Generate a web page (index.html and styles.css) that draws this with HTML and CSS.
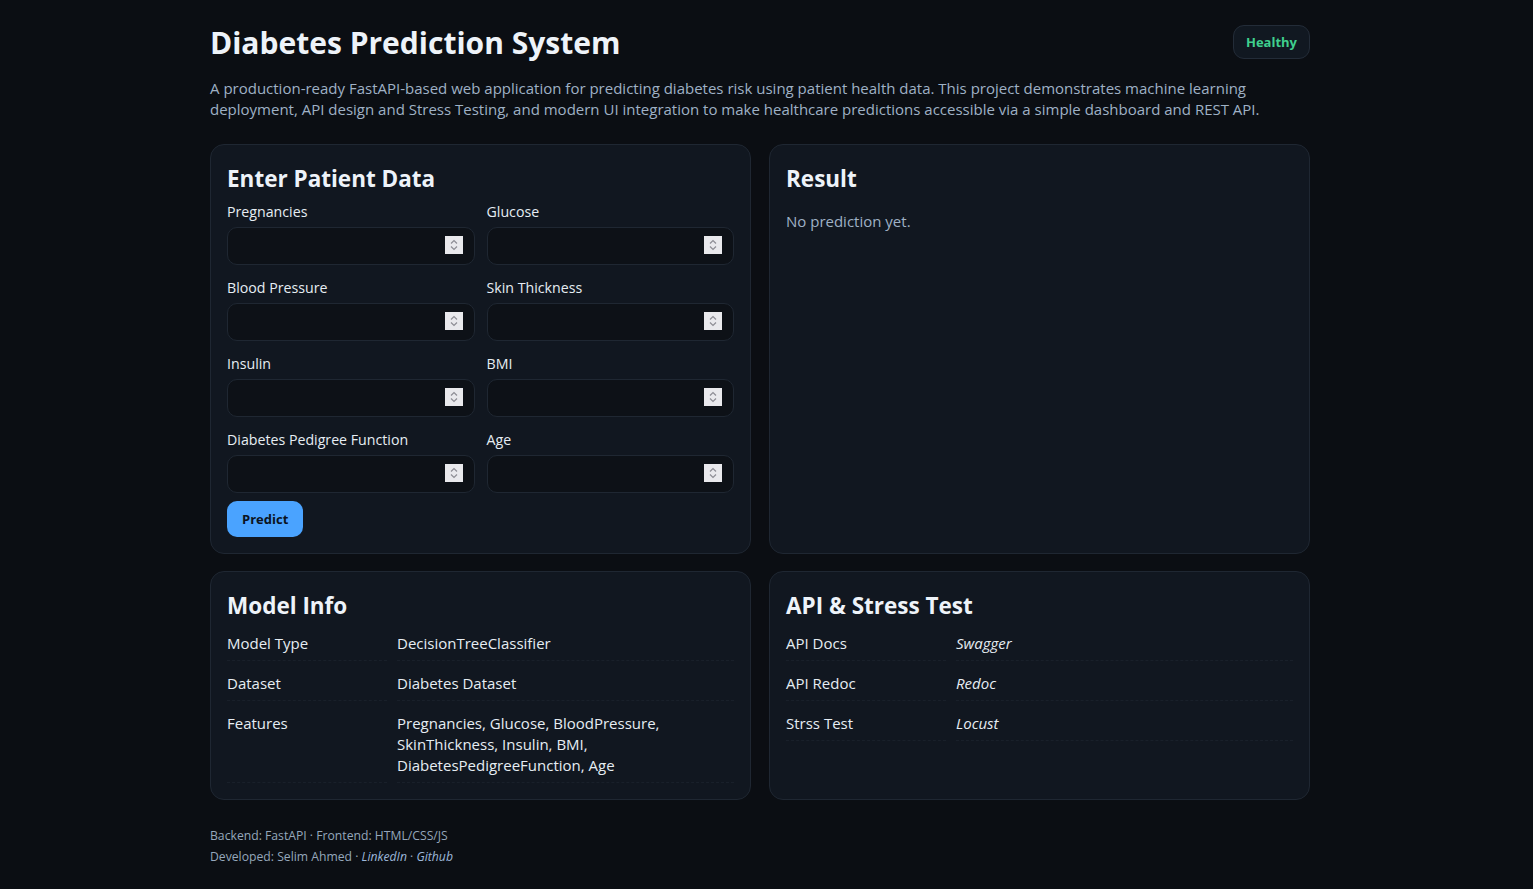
FILE: index.html
```html
<!DOCTYPE html>
<html lang="en">
<head>
<meta charset="utf-8">
<title>Diabetes Prediction System</title>
<link rel="stylesheet" href="styles.css">
</head>
<body>
<div class="wrap">
  <header class="header">
    <h1 class="title">Diabetes Prediction System</h1>
    <span class="badge">Healthy</span>
  </header>
  <p class="desc">A production-ready FastAPI-based web application for predicting diabetes risk using patient health data. This project demonstrates machine learning deployment, API design and Stress Testing, and modern UI integration to make healthcare predictions accessible via a simple dashboard and REST API.</p>

  <main class="grid">
    <section class="card">
      <h2 class="card-title">Enter Patient Data</h2>
      <form class="fields">
        <div class="field"><label class="label">Pregnancies</label><div class="input"><span class="spin"><svg width="18" height="18" viewBox="0 0 18 18"><path d="M6 7.5 9 4.5 12 7.5M6 10.5 9 13.5 12 10.5" fill="none" stroke="#8d8d95" stroke-width="1.2"/></svg></span></div></div>
        <div class="field"><label class="label">Glucose</label><div class="input"><span class="spin"><svg width="18" height="18" viewBox="0 0 18 18"><path d="M6 7.5 9 4.5 12 7.5M6 10.5 9 13.5 12 10.5" fill="none" stroke="#8d8d95" stroke-width="1.2"/></svg></span></div></div>
        <div class="field"><label class="label">Blood Pressure</label><div class="input"><span class="spin"><svg width="18" height="18" viewBox="0 0 18 18"><path d="M6 7.5 9 4.5 12 7.5M6 10.5 9 13.5 12 10.5" fill="none" stroke="#8d8d95" stroke-width="1.2"/></svg></span></div></div>
        <div class="field"><label class="label">Skin Thickness</label><div class="input"><span class="spin"><svg width="18" height="18" viewBox="0 0 18 18"><path d="M6 7.5 9 4.5 12 7.5M6 10.5 9 13.5 12 10.5" fill="none" stroke="#8d8d95" stroke-width="1.2"/></svg></span></div></div>
        <div class="field"><label class="label">Insulin</label><div class="input"><span class="spin"><svg width="18" height="18" viewBox="0 0 18 18"><path d="M6 7.5 9 4.5 12 7.5M6 10.5 9 13.5 12 10.5" fill="none" stroke="#8d8d95" stroke-width="1.2"/></svg></span></div></div>
        <div class="field"><label class="label">BMI</label><div class="input"><span class="spin"><svg width="18" height="18" viewBox="0 0 18 18"><path d="M6 7.5 9 4.5 12 7.5M6 10.5 9 13.5 12 10.5" fill="none" stroke="#8d8d95" stroke-width="1.2"/></svg></span></div></div>
        <div class="field"><label class="label">Diabetes Pedigree Function</label><div class="input"><span class="spin"><svg width="18" height="18" viewBox="0 0 18 18"><path d="M6 7.5 9 4.5 12 7.5M6 10.5 9 13.5 12 10.5" fill="none" stroke="#8d8d95" stroke-width="1.2"/></svg></span></div></div>
        <div class="field"><label class="label">Age</label><div class="input"><span class="spin"><svg width="18" height="18" viewBox="0 0 18 18"><path d="M6 7.5 9 4.5 12 7.5M6 10.5 9 13.5 12 10.5" fill="none" stroke="#8d8d95" stroke-width="1.2"/></svg></span></div></div>
      </form>
      <button class="btn" type="button">Predict</button>
    </section>

    <section class="card">
      <h2 class="card-title">Result</h2>
      <p class="muted result">No prediction yet.</p>
    </section>

    <section class="card">
      <h2 class="card-title">Model Info</h2>
      <div class="kv">
        <div class="k">Model Type</div><div class="v">DecisionTreeClassifier</div>
        <div class="k">Dataset</div><div class="v">Diabetes Dataset</div>
        <div class="k">Features</div><div class="v">Pregnancies, Glucose, BloodPressure, SkinThickness, Insulin, BMI, DiabetesPedigreeFunction, Age</div>
      </div>
    </section>

    <section class="card">
      <h2 class="card-title">API &amp; Stress Test</h2>
      <div class="kv">
        <div class="k">API Docs</div><div class="v"><a class="link">Swagger</a></div>
        <div class="k">API Redoc</div><div class="v"><a class="link">Redoc</a></div>
        <div class="k">Strss Test</div><div class="v"><a class="link">Locust</a></div>
      </div>
    </section>
  </main>

  <footer class="footer">
    <div>Backend: FastAPI · Frontend: HTML/CSS/JS</div>
    <div>Developed: Selim Ahmed · <a class="flink">LinkedIn</a> · <a class="flink">Github</a></div>
  </footer>
</div>
</body>
</html>
```

FILE: styles.css
```css
* { box-sizing: border-box; }
html, body { margin: 0; padding: 0; }
body {
  background: #0b0e13;
  color: #e6edf3;
  font-family: "Open Sans", "Noto Sans", sans-serif;
  font-size: 15px;
  line-height: 21px;
  padding-right: 13px;
}
.wrap {
  width: 1100px;
  margin: 0 auto;
  padding-top: 23px;
}
.header {
  display: flex;
  align-items: center;
  justify-content: space-between;
}
.title {
  margin: 0;
  font-size: 30px;
  line-height: 40px;
  font-weight: 700;
  color: #eef3f9;
}
.badge {
  display: inline-block;
  padding: 0 12px;
  height: 34px;
  line-height: 32px;
  margin-top: -3px;
  border: 1px solid #232c38;
  border-radius: 11px;
  background: #111821;
  color: #3fcf8e;
  font-weight: 700;
  font-size: 13px;
}
.desc {
  margin: 15px 0 24px;
  color: #9fb1c5;
  font-size: 15px;
  line-height: 21px;
}
.grid {
  display: grid;
  grid-template-columns: 1fr 1fr;
  gap: 17px 18px;
}
.card {
  background: #111720;
  border: 1px solid #1f2732;
  border-radius: 14px;
  padding: 16px;
}
.card-title {
  margin: 0 0 6px;
  padding-top: 2px;
  font-size: 22.5px;
  line-height: 32px;
  font-weight: 700;
  color: #eef3f9;
}
.fields {
  display: grid;
  grid-template-columns: 1fr 1fr;
  gap: 12px 12px;
  margin: 0;
}
.label {
  display: block;
  font-size: 14.2px;
  line-height: 20px;
  padding-top: 1px;
  margin-bottom: 5px;
  color: #e6edf3;
}
.input {
  position: relative;
  height: 38px;
  background: #0d1117;
  border: 1px solid #1f2732;
  border-radius: 10px;
}
.spin {
  position: absolute;
  right: 11px;
  top: 8px;
  width: 18px;
  height: 18px;
  background: #e9e9ed;
  display: block;
}
.spin svg { display: block; }
.btn {
  margin-top: 8px;
  height: 36px;
  padding: 0 15px;
  border: 0;
  border-radius: 10px;
  background: #4aa3ff;
  color: #0b1320;
  font-family: inherit;
  font-weight: 700;
  font-size: 13px;
}
.muted { color: #9fb1c5; }
.result { margin: 16px 0 0; }
.kv {
  display: grid;
  grid-template-columns: 160px 1fr;
  column-gap: 10px;
  row-gap: 7px;
}
.k, .v {
  padding: 5px 0 6px;
  border-bottom: 1px dashed #19202a;
}
.link {
  font-style: italic;
  color: #e6edf3;
}
.footer {
  margin-top: 25px;
  font-size: 12.2px;
  line-height: 21px;
  color: #95a7bb;
  padding-bottom: 20px;
}
.flink {
  font-style: italic;
  color: #9db8da;
}
```
